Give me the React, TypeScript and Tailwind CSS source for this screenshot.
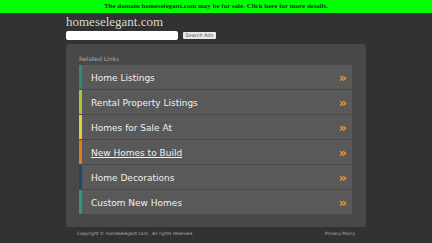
const links = [
  { label: "Home Listings", border: "border-[#2a8c70]" },
  { label: "Rental Property Listings", border: "border-[#a8c83a]" },
  { label: "Homes for Sale At", border: "border-[#e2d23a]" },
  { label: "New Homes to Build", border: "border-[#e27a1c]", underline: true },
  { label: "Home Decorations", border: "border-[#1c4a66]" },
  { label: "Custom New Homes", border: "border-[#2a9a7c]" },
];

export default function App() {
  return (
    <div className="w-[432px] h-[243px] overflow-hidden bg-[#323232] flex flex-col">
      <div className="h-[13px] bg-[#00ff00] flex items-center justify-center text-[7px] font-bold text-[#143814] font-['Liberation_Serif',serif]">
        The domain homeselegant.com may be for sale. Click here for more details.
      </div>
      <div className="w-[300px] mx-auto flex flex-col">
        <div className="mt-[2px] text-[13px] leading-[14px] text-[#d8d8d8] font-['Liberation_Serif',serif]">homeselegant.com</div>
        <div className="mt-[2px] flex items-center gap-[5px]">
          <div className="w-[112px] h-[9px] bg-white rounded-[2px]" />
          <div className="h-[7px] px-[2.5px] bg-[#e8e8e8] rounded-[1px] text-[5px] leading-[7px] text-[#555] font-['DejaVu_Sans',sans-serif]">Search Ads</div>
        </div>
        <div className="mt-[4px] h-[183px] bg-[#484848] rounded-[3px] pl-[13px] pr-[14px] pt-[11px] flex flex-col">
          <div className="text-[6px] leading-[8px] text-[#aaaaaa] font-['DejaVu_Sans',sans-serif]">Related Links</div>
          <div className="mt-[2px] flex flex-col gap-px">
            {links.map((l) => (
              <div key={l.label} className={`h-[24px] bg-[#595959] border-l-[3px] ${l.border} flex items-center justify-between pl-[9px] pr-[5px]`}>
                <span className={`pt-[4px] text-[9px] text-[#f0f0f0] font-['DejaVu_Sans',sans-serif] ${l.underline ? "underline" : ""}`}>{l.label}</span>
                <span className="text-[13px] leading-[13px] font-bold text-[#e8952a] font-['DejaVu_Sans',sans-serif]">»</span>
              </div>
            ))}
          </div>
        </div>
        <div className="mt-[4px] flex justify-between px-[11px] text-[4.4px] text-[#b0b0b0] font-['DejaVu_Sans',sans-serif]">
          <span>Copyright © homeselegant.com.&nbsp; All rights reserved.</span>
          <span>Privacy Policy</span>
        </div>
      </div>
    </div>
  );
}
